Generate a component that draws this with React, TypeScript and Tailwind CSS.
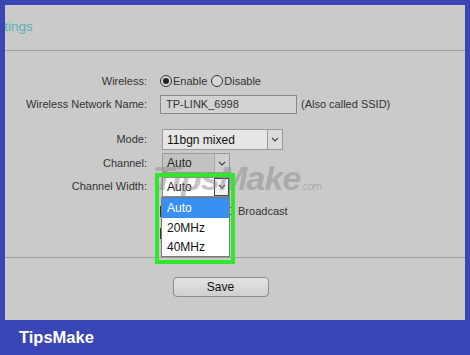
const font = { fontFamily: '"Liberation Sans", Arial, sans-serif' }

function Label({ children }: { children: React.ReactNode }) {
  return <div className="w-[142px] shrink-0 text-right text-[#333]">{children}</div>
}

function Radio({ checked }: { checked?: boolean }) {
  return (
    <span className="flex h-[12px] w-[12px] items-center justify-center rounded-full border border-[#333] bg-[#d6d6d6]">
      {checked && <span className="h-[6px] w-[6px] rounded-full bg-[#222]" />}
    </span>
  )
}

function Arrow({ className }: { className: string }) {
  return (
    <span className={`flex h-full w-[15px] items-center justify-center ${className}`}>
      <svg width="8" height="5" viewBox="0 0 8 5">
        <path d="M1 1 L4 4 L7 1" fill="none" stroke="#444" strokeWidth="1.2" />
      </svg>
    </span>
  )
}

export default function App() {
  return (
    <div className="flex h-[355px] w-[470px] flex-col bg-[#3a45b6] px-[5px] pt-[5px]" style={font}>
      <div className="relative flex h-[315px] flex-col overflow-hidden bg-[#cacaca] text-[11px]">
        <div className="flex h-[46px] items-center overflow-hidden border-b border-[#9c9c9c]">
          <span className="-ml-[21px] text-[13.5px] text-[#5aaeb6]">Settings</span>
        </div>

        <div className="mt-[21px] flex h-[18px] items-center">
          <Label>Wireless:</Label>
          <div className="ml-[13px] flex items-center text-[#333]">
            <Radio checked />
            <span className="ml-[1px]">Enable</span>
            <span className="ml-[4px]"><Radio /></span>
            <span className="ml-[1px]">Disable</span>
          </div>
        </div>

        <div className="mt-[4px] flex h-[20px] items-center">
          <Label>Wireless Network Name:</Label>
          <div className="ml-[13px] flex h-[19px] w-[137px] items-center border border-[#8a8a8a] bg-[#d2d2d2] pl-[5px] text-[#333]">
            TP-LINK_6998
          </div>
          <span className="ml-[4px] text-[#333]">(Also called SSID)</span>
        </div>

        <div className="mt-[15px] flex h-[21px] items-center">
          <Label>Mode:</Label>
          <div className="ml-[15px] flex h-[21px] w-[121px] items-center border border-[#9a9a9a] bg-[#e6e6e6]">
            <span className="flex-1 pl-[4px] text-[12px] text-[#111]">11bgn mixed</span>
            <Arrow className="border-l border-[#9a9a9a] bg-[#dcdcdc]" />
          </div>
        </div>

        <div className="mt-[3px] flex h-[20px] items-center">
          <Label>Channel:</Label>
          <div className="ml-[15px] flex h-[20px] w-[68px] items-center border border-[#9a9a9a] bg-[#c2c2c2]">
            <span className="flex-1 pl-[4px] text-[12px] text-[#222]">Auto</span>
            <Arrow className="border-l border-[#a8a8a8] bg-[#cfcfcf]" />
          </div>
        </div>

        <div className="mt-[3px] flex h-[21px] items-center">
          <Label>Channel Width:</Label>
          <div className="ml-[15px] flex h-[20px] w-[68px] items-center border border-[#8a8a8a] bg-white">
            <span className="flex-1 pl-[4px] text-[12px] text-[#111]">Auto</span>
            <Arrow className="border border-[#445] bg-[#f2f2f2]" />
          </div>
        </div>

        <div className="mt-[4px] flex h-[20px] items-center">
          <div className="w-[155px] shrink-0" />
          <span className="h-[11px] w-[11px] border border-[#333] bg-[#e8e8e8]" />
          <span className="ml-[1px] text-[#333]">Enable SSID Broadcast</span>
        </div>

        <div className="mt-[2px] flex h-[20px] items-center">
          <div className="w-[155px] shrink-0" />
          <span className="h-[11px] w-[11px] border border-[#333] bg-[#e8e8e8]" />
        </div>

        <div className="mt-[14px] border-b border-[#9c9c9c]" />

        <div className="mt-[19px] flex justify-center pr-[29px]">
          <button className="h-[20px] w-[96px] rounded-[4px] border border-[#8c8c8c] bg-gradient-to-b from-[#e4e4e4] to-[#cfcfcf] text-[12px] text-[#111]">
            Save
          </button>
        </div>

        <div className="pointer-events-none absolute left-[148px] top-[156px] select-none text-[34px] font-bold italic leading-none tracking-tight text-[#8a8a8a]/50">
          TipsMake<span className="text-[11px] font-normal not-italic">.com</span>
        </div>

        <div className="absolute left-[150px] top-[168px] h-[91px] w-[80px] border-[4px] border-[#2fe82a]" />

        <div className="absolute left-[156px] top-[192px] flex w-[69px] flex-col border border-[#7a7a7a] bg-white text-[12px] text-[#111]">
          <div className="flex h-[20px] items-center bg-[#3a8ff3] pl-[5px] text-white">Auto</div>
          <div className="flex h-[19px] items-center pl-[5px]">20MHz</div>
          <div className="flex h-[19px] items-center pl-[5px]">40MHz</div>
        </div>
      </div>

      <div className="flex flex-1 items-center pl-[14px]">
        <span className="text-[16.5px] font-bold text-white">TipsMake</span>
      </div>
    </div>
  )
}
